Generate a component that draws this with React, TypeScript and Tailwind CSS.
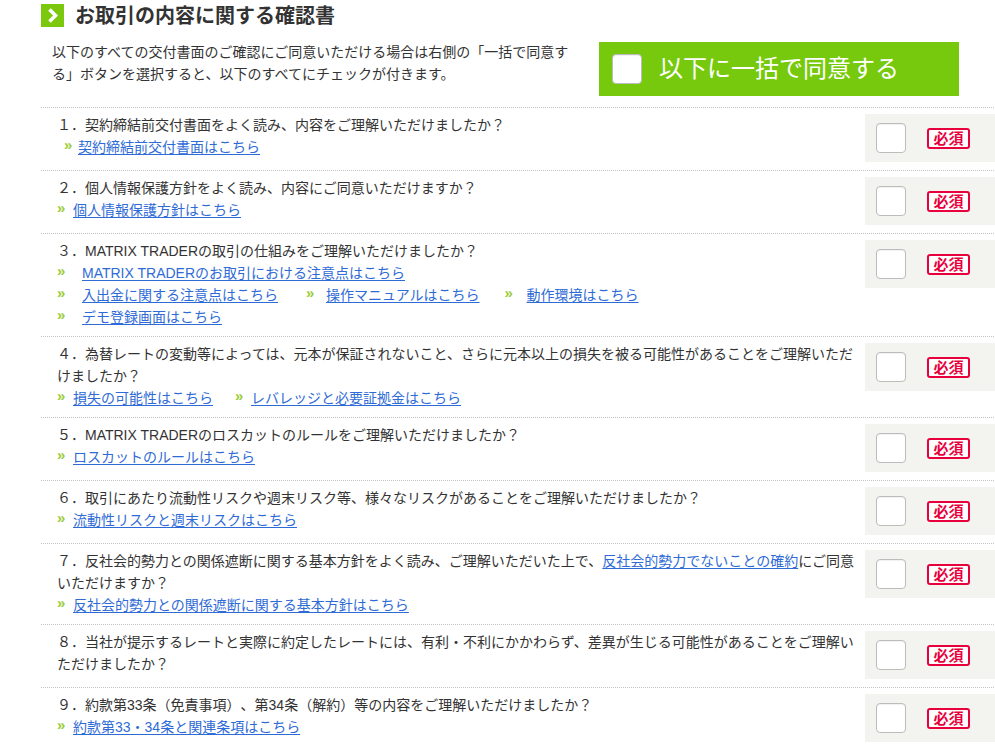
import React from "react";

type Item = { text: string; mr?: string; aw?: string };
type Row = {
  q: React.ReactNode;
  lines: Item[][];
  indent?: string;
};

const FONT = { fontFamily: '"Liberation Sans", "Noto Sans CJK JP", sans-serif' };

function CheckBox() {
  return (
    <div className="w-[30px] h-[30px] shrink-0 bg-white border border-[#bcbcbc] rounded-[4px] shadow-[inset_0_1px_1px_rgba(0,0,0,0.06)]" />
  );
}

function LinkItem({ item }: { item: Item }) {
  return (
    <span className={`inline-flex items-start ${item.mr ?? ""}`}>
      <span className={`text-[15px] leading-[17px] font-bold text-[#9ccc3a] ${item.aw ?? "w-[16px]"}`}>»</span>
      <a href="#" className="text-[#2f6bd6] underline underline-offset-[2px]">
        {item.text}
      </a>
    </span>
  );
}

const rows: Row[] = [
  {
    q: "１．契約締結前交付書面をよく読み、内容をご理解いただけましたか？",
    lines: [[{ text: "契約締結前交付書面はこちら", aw: "w-[14px]" }]],
    indent: "pl-[7px]",
  },
  {
    q: "２．個人情報保護方針をよく読み、内容にご同意いただけますか？",
    lines: [[{ text: "個人情報保護方針はこちら" }]],
  },
  {
    q: "３．MATRIX TRADERの取引の仕組みをご理解いただけましたか？",
    lines: [
      [{ text: "MATRIX TRADERのお取引における注意点はこちら", aw: "w-[25px]" }],
      [
        { text: "入出金に関する注意点はこちら", mr: "mr-[28px]", aw: "w-[25px]" },
        { text: "操作マニュアルはこちら", mr: "mr-[25px]", aw: "w-[20px]" },
        { text: "動作環境はこちら", aw: "w-[22px]" },
      ],
      [{ text: "デモ登録画面はこちら", aw: "w-[25px]" }],
    ],
  },
  {
    q: "４．為替レートの変動等によっては、元本が保証されないこと、さらに元本以上の損失を被る可能性があることをご理解いただけましたか？",
    lines: [
      [
        { text: "損失の可能性はこちら", mr: "mr-[22px]" },
        { text: "レバレッジと必要証拠金はこちら" },
      ],
    ],
  },
  {
    q: "５．MATRIX TRADERのロスカットのルールをご理解いただけましたか？",
    lines: [[{ text: "ロスカットのルールはこちら" }]],
  },
  {
    q: "６．取引にあたり流動性リスクや週末リスク等、様々なリスクがあることをご理解いただけましたか？",
    lines: [[{ text: "流動性リスクと週末リスクはこちら" }]],
  },
  {
    q: (
      <>
        ７．反社会的勢力との関係遮断に関する基本方針をよく読み、ご理解いただいた上で、
        <a href="#" className="text-[#2f6bd6] underline underline-offset-[2px]">
          反社会的勢力でないことの確約
        </a>
        にご同意いただけますか？
      </>
    ),
    lines: [[{ text: "反社会的勢力との関係遮断に関する基本方針はこちら" }]],
  },
  {
    q: "８．当社が提示するレートと実際に約定したレートには、有利・不利にかかわらず、差異が生じる可能性があることをご理解いただけましたか？",
    lines: [],
  },
  {
    q: "９．約款第33条（免責事項）、第34条（解約）等の内容をご理解いただけましたか？",
    lines: [[{ text: "約款第33・34条と関連条項はこちら" }]],
  },
];

export default function App() {
  return (
    <div
      className="w-[995px] h-[745px] overflow-hidden bg-white text-[#333] [text-spacing-trim:space-all]"
      style={FONT}
    >
      <div className="pl-[41px] w-[1000px]">
        {/* title */}
        <div className="flex items-center h-[28px] pt-[3px]">
          <div className="w-[23px] h-[23px] bg-[#7cc80f] flex items-center justify-center">
            <svg width="12" height="15" viewBox="0 0 12 15">
              <path d="M2.5 1.5 L8.5 7.5 L2.5 13.5" fill="none" stroke="#fff" strokeWidth="3.6" />
            </svg>
          </div>
          <h1 className="ml-[11px] text-[20px] leading-[28px] font-bold text-[#333]">
            お取引の内容に関する確認書
          </h1>
        </div>

        {/* intro */}
        <div className="flex pt-[14px] pb-[11px]">
          <p className="ml-[11px] w-[530px] -mt-[1px] text-[14px] leading-[22px] text-[#333]">
            以下のすべての交付書面のご確認にご同意いただける場合は右側の「一括で同意する」ボタンを選択すると、以下のすべてにチェックが付きます。
          </p>
          <button className="ml-[17px] w-[360px] h-[54px] bg-[#77c90e] flex items-center pl-[13px]">
            <CheckBox />
            <span className="ml-[17px] text-[24px] leading-none text-white">以下に一括で同意する</span>
          </button>
        </div>

        {/* rows */}
        {rows.map((r, i) => (
          <div key={i} className="flex items-start border-t border-dotted border-[#c4c4c4] pt-[6px] pb-[8px]">
            <div className="pl-[16px] w-[816px] text-[14px] leading-[22px]">
              <div className="w-[800px]">{r.q}</div>
              {r.lines.map((line, j) => (
                <div key={j} className={`flex ${r.indent ?? ""}`}>
                  {line.map((it, k) => (
                    <LinkItem key={k} item={it} />
                  ))}
                </div>
              ))}
            </div>
            <div className="ml-[8px] flex-1 h-[48px] bg-[#f3f3ef] flex items-center pl-[11px]">
              <CheckBox />
              <div className="ml-[21px] w-[43px] h-[21px] border-2 border-[#e8003d] rounded-[3px] bg-white flex items-center justify-center text-[15px] leading-none font-bold text-[#e8003d]">
                必須
              </div>
            </div>
          </div>
        ))}
      </div>
    </div>
  );
}
